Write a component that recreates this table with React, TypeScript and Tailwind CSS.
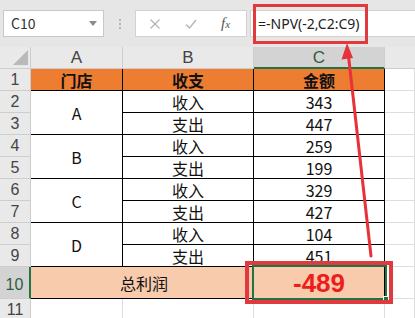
import React from 'react'

const font = "font-['Noto_Sans_CJK_SC',sans-serif]"

const colHead = "flex items-center justify-center bg-[#e9e9e9] border-r border-b border-[#cdcdcd] text-[17px] leading-none text-[#444] font-['Liberation_Sans',sans-serif]"
const rowHead = "flex items-center justify-center bg-[#e9e9e9] border-r border-b border-[#cdcdcd] text-[16px] leading-none text-[#444] font-['Liberation_Sans',sans-serif]"
const cell = 'flex items-center justify-center border-r border-b border-black text-[16px] leading-none text-[#111]'
const blank = 'border-r border-b border-[#dedede] bg-white'

const rows = [
  { n: 2, store: 'A', type: '收入', amt: 343 },
  { n: 3, type: '支出', amt: 447 },
  { n: 4, store: 'B', type: '收入', amt: 259 },
  { n: 5, type: '支出', amt: 199 },
  { n: 6, store: 'C', type: '收入', amt: 329 },
  { n: 7, type: '支出', amt: 427 },
  { n: 8, store: 'D', type: '收入', amt: 104 },
  { n: 9, type: '支出', amt: 451 },
]

const App = () => {
  return (
    <div className={`relative w-[415px] h-[318px] overflow-hidden bg-white ${font}`}>
      {/* formula bar */}
      <div className="flex h-[47px] bg-[#e6e6e6] pt-[10px]">
        <div className="ml-[3px] w-[101px] h-[27px] bg-white border border-[#c8c8c8] flex items-center pl-[7px] pr-[6px] text-[14px] text-[#333]">
          <span className="flex-1">C10</span>
          <svg width="8" height="5" viewBox="0 0 8 5"><path d="M0 0h8L4 5z" fill="#8a8a8a" /></svg>
        </div>
        <div className="w-[31px] flex flex-col items-center justify-center gap-[2px] h-[27px]">
          <div className="w-[2px] h-[2px] bg-[#b5b5b5]" />
          <div className="w-[2px] h-[2px] bg-[#b5b5b5]" />
          <div className="w-[2px] h-[2px] bg-[#b5b5b5]" />
        </div>
        <div className="w-[112px] h-[27px] bg-white border border-[#d2d2d2] flex items-center pl-[13px] gap-[24px]">
          <svg width="12" height="12" viewBox="0 0 12 12"><path d="M1.5 1.5l9 9M10.5 1.5l-9 9" stroke="#b4b4b4" strokeWidth="1.3" /></svg>
          <svg width="12" height="12" viewBox="0 0 12 12"><path d="M1 6.5l3.5 3.5L11 2" stroke="#b4b4b4" strokeWidth="1.3" fill="none" /></svg>
          <span className="font-['Liberation_Serif',serif] italic text-[15px] text-[#555] leading-none">f<span className="text-[11px]">x</span></span>
        </div>
        <div className="ml-[3px] flex-1 h-[27px] bg-white border-y border-l border-[#d2d2d2] flex items-center pl-[7px] text-[14px] text-[#222] font-['Noto_Sans',sans-serif]">
          =-NPV(-2,C2:C9)
        </div>
      </div>

      {/* sheet */}
      <div className="grid grid-cols-[31px_92px_131px_131px_1fr] grid-rows-[repeat(10,22px)_32px_22px]">
        <div className="relative bg-[#e9e9e9] border-r border-b border-[#cdcdcd]">
          <svg className="absolute right-[2px] bottom-[3px]" width="15" height="15" viewBox="0 0 15 15"><path d="M15 0V15H0z" fill="#b9b9b9" /></svg>
        </div>
        <div className={colHead}>A</div>
        <div className={colHead}>B</div>
        <div className="flex items-center justify-center bg-[#d3d3d3] border-r border-[#cdcdcd] border-b-2 border-b-[#217346] text-[17px] leading-none text-[#2e5e3e] font-['Liberation_Sans',sans-serif]">C</div>
        <div className="bg-[#e9e9e9] border-b border-[#cdcdcd]" />

        <div className={rowHead}>1</div>
        <div className={`${cell} bg-[#ed7d31] font-bold`}>门店</div>
        <div className={`${cell} bg-[#ed7d31] font-bold`}>收支</div>
        <div className={`${cell} bg-[#ed7d31] font-bold`}>金额</div>
        <div className={blank} />

        {rows.map((r) => (
          <React.Fragment key={r.n}>
            <div className={rowHead}>{r.n}</div>
            {r.store && <div className={`${cell} row-span-2 bg-white`}>{r.store}</div>}
            <div className={`${cell} bg-white`}>{r.type}</div>
            <div className={`${cell} bg-white`}>{r.amt}</div>
            <div className={blank} />
          </React.Fragment>
        ))}

        <div className="flex items-end justify-center pb-[5px] bg-[#d3d3d3] border-b border-[#cdcdcd] border-r-2 border-r-[#217346] text-[16px] leading-none text-[#2e5e3e] font-['Liberation_Sans',sans-serif]">10</div>
        <div className={`${cell} col-span-2 bg-[#f8cbad] pl-[4px]`}>总利润</div>
        <div className={`${cell} bg-[#f8cbad] text-[26px] font-bold text-[#ee1c1c] font-['Liberation_Sans',sans-serif]`}>-489</div>
        <div className={blank} />

        <div className={rowHead}>11</div>
        <div className={blank} />
        <div className={blank} />
        <div className={blank} />
        <div className={blank} />
      </div>

      {/* selection on C10 */}
      <div className="absolute left-[252px] top-[265px] w-[135px] h-[35px] border-2 border-[#217346]" />
      <div className="absolute left-[383px] top-[296px] w-[6px] h-[6px] bg-[#217346] border border-white" />

      {/* annotations */}
      <div className="absolute left-[253px] top-[4px] w-[115px] h-[40px] border-[3px] border-[#e0393e]" />
      <div className="absolute left-[245px] top-[261px] w-[148px] h-[43px] border-[4px] border-[#e0393e]" />
      <svg className="absolute left-0 top-0" width="415" height="318" viewBox="0 0 415 318">
        <path d="M371 256L348.5 56" stroke="#e8323a" strokeWidth="3" strokeLinecap="round" />
        <path d="M347 43L353 58L341.5 59.5z" fill="#e8323a" />
      </svg>
    </div>
  )
}

export default App
